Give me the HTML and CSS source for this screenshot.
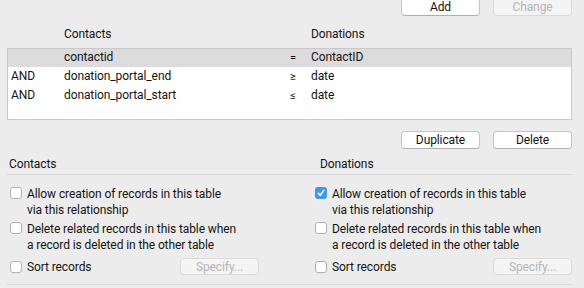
FILE: index.html
```html
<!DOCTYPE html>
<html lang="en">
<head>
    <meta charset="UTF-8">
    <title>Edit Relationship</title>
    <link rel="stylesheet" href="styles.css">
</head>
<body>

    <div class="toolbar top-bar">
        <button class="btn">Add</button>
        <button class="btn" disabled>Change</button>
    </div>

    <div class="grid-cols col-heads">
        <span></span>
        <span>Contacts</span>
        <span></span>
        <span>Donations</span>
    </div>

    <div class="criteria">
        <div class="grid-cols crit-row selected">
            <span></span>
            <span>contactid</span>
            <span class="op">=</span>
            <span>ContactID</span>
        </div>
        <div class="grid-cols crit-row">
            <span>AND</span>
            <span>donation_portal_end</span>
            <span class="op">&ge;</span>
            <span>date</span>
        </div>
        <div class="grid-cols crit-row">
            <span>AND</span>
            <span>donation_portal_start</span>
            <span class="op">&le;</span>
            <span>date</span>
        </div>
    </div>

    <div class="toolbar mid-bar">
        <button class="btn">Duplicate</button>
        <button class="btn">Delete</button>
    </div>

    <div class="sides side-heads">
        <div class="side-label left">Contacts</div>
        <div class="side-label right">Donations</div>
    </div>

    <div class="sides options">
        <div class="side left">
            <label class="opt first">
                <span class="box"></span>
                <span>Allow creation of records in this table<br>via this relationship</span>
            </label>
            <label class="opt">
                <span class="box"></span>
                <span>Delete related records in this table when<br>a record is deleted in the other table</span>
            </label>
            <div class="opt sort-row">
                <span class="box"></span>
                <span>Sort records</span>
                <button class="btn specify" disabled>Specify...</button>
            </div>
        </div>
        <div class="side right">
            <label class="opt first">
                <span class="box checked">
                    <svg viewBox="0 0 12 12" width="12" height="12"><path d="M3.3 6.3 L5.2 8.4 L8.8 3.4" fill="none" stroke="#fff" stroke-width="1.6" stroke-linecap="round" stroke-linejoin="round"/></svg>
                </span>
                <span>Allow creation of records in this table<br>via this relationship</span>
            </label>
            <label class="opt">
                <span class="box"></span>
                <span>Delete related records in this table when<br>a record is deleted in the other table</span>
            </label>
            <div class="opt sort-row">
                <span class="box"></span>
                <span>Sort records</span>
                <button class="btn specify" disabled>Specify...</button>
            </div>
        </div>
    </div>

</body>
</html>
```

FILE: styles.css
```css
/* window background and base type */
body {
    margin: 0;
    background-color: #ececec;
    font-family: Roboto, "Liberation Sans", sans-serif;
    font-size: 12px;
    letter-spacing: -0.1px;
    color: #141414;
    overflow: hidden;
}

* {
    box-sizing: border-box;
}

.btn {
    width: 79px;
    height: 18px;
    padding: 0;
    background-color: #fff;
    border: 1px solid #c4c4c4;
    border-bottom-color: #afafaf;
    border-radius: 4px;
    font-family: inherit;
    font-size: 12px;
    letter-spacing: -0.1px;
    color: #141414;
}

.btn:disabled {
    background-color: #f4f4f4;
    border-color: #dadada;
    color: #b4b4b4;
}

.toolbar {
    display: flex;
    justify-content: flex-end;
    gap: 13px;
    padding-right: 12px;
}

.top-bar {
    height: 16px;
    align-items: flex-end;
}

.grid-cols {
    display: grid;
    grid-template-columns: 56px 225px 22px 1fr;
}

.col-heads {
    margin: 10px 0 0 8px;
    line-height: 16px;
}

.criteria {
    margin: 6px 12px 0 7px;
    height: 72px;
    background-color: #fff;
    border: 1px solid #c8c8c8;
}

.crit-row {
    height: 19px;
    line-height: 19px;
}

.crit-row span:first-child {
    padding-left: 3px;
}

.crit-row.selected {
    background-color: #dcdcdc;
    height: 18px;
    line-height: 17px;
}

.op {
    font-size: 11px;
    padding-left: 1px;
}

.mid-bar {
    margin-top: 11px;
}

.sides {
    display: grid;
    grid-template-columns: 305px 1fr;
    margin: 0 12px 0 7px;
}

.side-heads {
    margin-top: 7px;
    line-height: 16px;
    padding-bottom: 2px;
    border-bottom: 1px solid #d6d6d6;
}

.side-label.left {
    padding-left: 2px;
}

.side-label.right {
    padding-left: 8px;
}

.options {
    padding: 11px 0 9px;
    border-bottom: 1px solid #d6d6d6;
}

.side {
    padding-left: 3px;
}

.opt {
    display: flex;
    align-items: flex-start;
    gap: 5px;
    line-height: 16px;
    margin-top: 3px;
}

.opt.first {
    margin-top: 0;
}

.box {
    flex: none;
    width: 12px;
    height: 12px;
    margin-top: 1px;
    background-color: #fff;
    border: 1px solid #b0b0b0;
    border-radius: 3px;
}

.box.checked {
    background-color: #3d97f7;
    border: none;
}

.box svg {
    display: block;
}

.sort-row {
    align-items: center;
    margin-top: 5px;
    height: 17px;
}

.sort-row .box {
    margin-top: 0;
}

.specify {
    margin-left: auto;
    height: 17px;
}

.side.left .specify {
    margin-right: 53px;
}
```
